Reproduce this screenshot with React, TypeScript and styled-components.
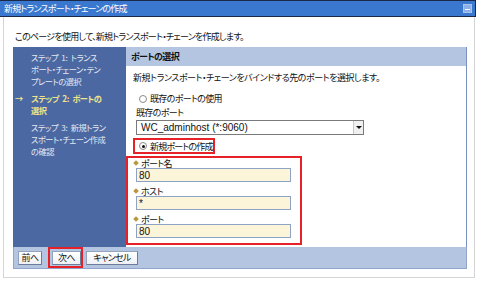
import React from "react";
import styled, { createGlobalStyle } from "styled-components";

const Global = createGlobalStyle`
  html, body { margin: 0; padding: 0; background: #fff; }
  body {
    width: 480px; height: 283px; overflow: hidden;
    font-family: "Noto Sans CJK JP", "Liberation Sans", sans-serif;
    font-feature-settings: "palt";
    font-size: 9px; color: #222;
    letter-spacing: -0.65px;
    word-spacing: 2px;
  }
`;

const Page = styled.div`
  width: 480px;
  height: 283px;
  display: flex;
  flex-direction: column;
`;

const TitleBar = styled.div`
  width: 476px;
  height: 17px;
  box-sizing: border-box;
  background: #3a78cf;
  border: 1px solid #1b2a48;
  border-left: none;
  display: flex;
  align-items: center;
  justify-content: space-between;
  padding: 0 3px 0 4px;
  color: #fff;
  font-size: 9px;
  line-height: 1;
  letter-spacing: -0.8px;
`;

const MinButton = styled.div`
  width: 9px;
  height: 9px;
  background: #8cb1e6;
  border: 1px solid #a9c6ef;
  box-sizing: border-box;
  display: flex;
  align-items: center;
  justify-content: center;
  &::after {
    content: "";
    width: 5px;
    height: 1px;
    background: #fff;
    margin-top: 2px;
  }
`;

const Body = styled.div`
  margin-left: 3px;
  width: 472px;
  height: 261px;
  box-sizing: border-box;
  border: 1px solid #d5d5d5;
  border-top: none;
  display: flex;
  flex-direction: column;
  padding: 14px 0 0 9px;
`;

const Intro = styled.div`
  padding-left: 2px;
  height: 16px;
  line-height: 12px;
  font-size: 9px;
  color: #111;
  letter-spacing: -0.75px;
`;

const Wizard = styled.div`
  width: 454px;
  height: 222px;
  display: grid;
  grid-template-columns: 113px 1fr;
  grid-template-rows: 1fr 22px;
`;

const Nav = styled.div`
  background: #4b68a2;
  display: flex;
  flex-direction: column;
  gap: 5px;
  padding: 4px 0 0 0;
`;

const Step = styled.div<{ $current?: boolean }>`
  display: grid;
  grid-template-columns: 18px 1fr;
  color: ${(p) => (p.$current ? "#f2e48a" : "#e4e9f3")};
  font-weight: ${(p) => (p.$current ? 700 : 400)};
  font-size: 8.2px;
  line-height: 12px;
  white-space: nowrap;
  letter-spacing: -0.45px;
`;

const Arrow = styled.span`
  padding-left: 2px;
  font-weight: 700;
`;

const Main = styled.div`
  border-right: 1px solid #7d93bf;
  display: flex;
  flex-direction: column;
`;

const Header = styled.div`
  height: 19px;
  background: #b3c5e0;
  display: flex;
  align-items: center;
  padding-left: 5px;
  font-weight: 700;
  font-size: 9px;
  color: #111;
`;

const Content = styled.div`
  display: flex;
  flex-direction: column;
  padding: 6px 0 0 7px;
`;

const Text = styled.div<{ $indent?: number; $ls?: number }>`
  line-height: 12px;
  height: 12px;
  color: #111;
  white-space: nowrap;
  padding-left: ${(p) => p.$indent ?? 0}px;
  ${(p) => (p.$ls !== undefined ? `letter-spacing: ${p.$ls}px;` : "")}
`;

const RadioRow = styled.label<{ $indent?: number }>`
  display: flex;
  align-items: center;
  gap: 3px;
  height: 13px;
  color: #111;
  white-space: nowrap;
  padding-left: ${(p) => p.$indent ?? 0}px;
`;

const Radio = styled.span<{ $checked?: boolean }>`
  width: 8px;
  height: 8px;
  border-radius: 50%;
  box-sizing: border-box;
  border: 1px solid #8a8a8a;
  background: #fff;
  display: flex;
  align-items: center;
  justify-content: center;
  &::after {
    content: "";
    width: 3px;
    height: 3px;
    border-radius: 50%;
    background: ${(p) => (p.$checked ? "#111" : "transparent")};
  }
`;

const Spacer = styled.div<{ $h: number }>`
  height: ${(p) => p.$h}px;
  flex: none;
`;

const Select = styled.div`
  margin-left: 3px;
  width: 228px;
  height: 15px;
  box-sizing: border-box;
  border: 1px solid #7a7a7a;
  display: flex;
  align-items: center;
  justify-content: space-between;
  padding-left: 4px;
  font-family: "Liberation Sans", sans-serif;
  letter-spacing: 0;
  word-spacing: 0;
  font-size: 10px;
  color: #111;
`;

const DropBtn = styled.div`
  width: 10px;
  height: 13px;
  box-sizing: border-box;
  border-left: 1px solid #c8c8c8;
  background: #f0f0f0;
  display: flex;
  align-items: center;
  justify-content: center;
  &::after {
    content: "";
    border-left: 3px solid transparent;
    border-right: 3px solid transparent;
    border-top: 3px solid #111;
  }
`;

const RedBox = styled.div<{ $w: number }>`
  border: 2px solid #e62228;
  width: ${(p) => p.$w}px;
  box-sizing: border-box;
`;

const NewPortBox = styled(RedBox)`
  height: 16px;
  display: flex;
  align-items: center;
  padding-left: 4px;
  letter-spacing: -0.8px;
`;

const FieldBox = styled(RedBox)`
  margin-left: -7px;
  height: 89px;
  padding: 0 0 0 8px;
  display: flex;
  flex-direction: column;
  margin-top: 2px;
`;

const Field = styled.div`
  display: flex;
  flex-direction: column;
  margin-bottom: 4px;
`;

const Label = styled.div`
  display: flex;
  align-items: center;
  gap: 3px;
  height: 10px;
  color: #111;
  margin-left: -2px;
`;

const Bullet = styled.span`
  width: 4px;
  height: 4px;
  background: #b89a3c;
  transform: rotate(45deg);
`;

const Input = styled.div`
  width: 155px;
  height: 14px;
  box-sizing: border-box;
  border: 1px solid #8ea3c3;
  background: #fdf5d9;
  display: flex;
  align-items: center;
  padding-left: 2px;
  font-family: "Liberation Sans", sans-serif;
  letter-spacing: 0;
  font-size: 10px;
  color: #111;
`;

const ButtonBar = styled.div`
  grid-column: 1 / 3;
  background: #b3c5e0;
  border: 1px solid #8fa5ca;
  border-top: none;
  display: flex;
  align-items: center;
  padding-left: 4px;
`;

const Button = styled.div<{ $w: number; $ml?: number }>`
  width: ${(p) => p.$w}px;
  margin-left: ${(p) => p.$ml ?? 0}px;
  height: 14px;
  box-sizing: border-box;
  border: 1px solid #93a2bd;
  border-right-color: #6d7c98;
  border-bottom-color: #6d7c98;
  background: linear-gradient(#ffffff, #eef0f4);
  display: flex;
  align-items: center;
  justify-content: center;
  font-size: 9px;
  color: #111;
`;

const NextWrap = styled.div`
  border: 2px solid #e62228;
  height: 21px;
  box-sizing: border-box;
  align-items: center;
  padding: 0 0 0 2px;
  margin-left: 6px;
  display: flex;
`;

export default function App() {
  return (
    <Page>
      <Global />
      <TitleBar>
        <span>新規トランスポート・チェーンの作成</span>
        <MinButton />
      </TitleBar>
      <Body>
        <Intro>このページを使用して、新規トランスポート・チェーンを作成します。</Intro>
        <Wizard>
          <Nav>
            <Step>
              <span />
              <span>
                ステップ 1: トランス
                <br />
                ポート・チェーン・テン
                <br />
                プレートの選択
              </span>
            </Step>
            <Step $current>
              <Arrow>→</Arrow>
              <span>
                ステップ 2: ポートの
                <br />
                選択
              </span>
            </Step>
            <Step>
              <span />
              <span>
                ステップ 3: 新規トラン
                <br />
                スポート・チェーン作成
                <br />
                の確認
              </span>
            </Step>
          </Nav>
          <Main>
            <Header>ポートの選択</Header>
            <Content>
              <Text $ls={-0.45}>新規トランスポート・チェーンをバインドする先のポートを選択します。</Text>
              <Spacer $h={8} />
              <RadioRow $indent={6}>
                <Radio />
                既存のポートの使用
              </RadioRow>
              <Spacer $h={2} />
              <Text $indent={3}>既存のポート</Text>
              <Spacer $h={1} />
              <Select>
                WC_adminhost (*:9060)
                <DropBtn />
              </Select>
              <Spacer $h={3} />
              <NewPortBox $w={82}>
                <RadioRow>
                  <Radio $checked />
                  新規ポートの作成
                </RadioRow>
              </NewPortBox>
              <FieldBox $w={176}>
                <Field>
                  <Label><Bullet />ポート名</Label>
                  <Input>80</Input>
                </Field>
                <Field>
                  <Label><Bullet />ホスト</Label>
                  <Input>*</Input>
                </Field>
                <Field>
                  <Label><Bullet />ポート</Label>
                  <Input>80</Input>
                </Field>
              </FieldBox>
            </Content>
          </Main>
          <ButtonBar>
            <Button $w={24}>前へ</Button>
            <NextWrap>
              <Button $w={29}>次へ</Button>
            </NextWrap>
            <Button $w={52} $ml={3}>キャンセル</Button>
          </ButtonBar>
        </Wizard>
      </Body>
    </Page>
  );
}
